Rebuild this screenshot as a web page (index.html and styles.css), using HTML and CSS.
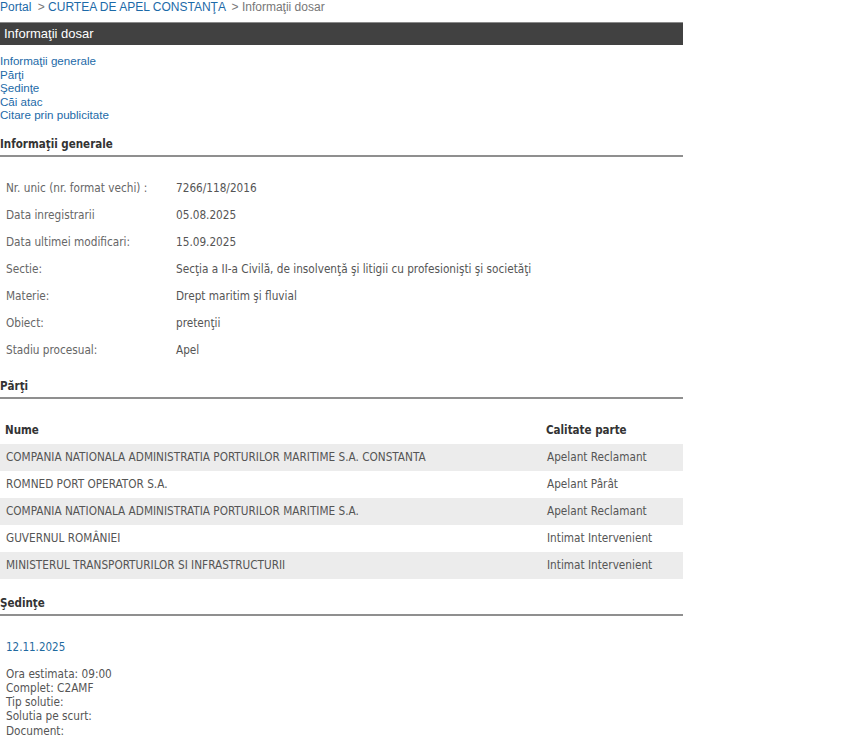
FILE: index.html
```html
<!DOCTYPE html>
<html>
<head>
    <meta charset="utf-8">
    <title>Informaţii dosar</title>
    <link rel="stylesheet" href="styles.css">
</head>
<body>

<div class="page">
    <div class="breadcrumb">
        <a href="#">Portal</a> <span class="sep">&gt;</span> <a href="#">CURTEA DE APEL CONSTANŢA</a> <span class="sep">&gt;</span> <span class="current">Informaţii dosar</span>
    </div>

    <div class="title-bar">Informaţii dosar</div>

    <ul class="toc">
        <li><a href="#info">Informaţii generale</a></li>
        <li><a href="#parti">Părţi</a></li>
        <li><a href="#sedinte">Şedinţe</a></li>
        <li><a href="#cai">Căi atac</a></li>
        <li><a href="#citare">Citare prin publicitate</a></li>
    </ul>

    <h3 class="section-title" id="info">Informaţii generale</h3>
    <table class="info">
        <tr><td class="label">Nr. unic (nr. format vechi) :</td><td>7266/118/2016</td></tr>
        <tr><td class="label">Data inregistrarii</td><td>05.08.2025</td></tr>
        <tr><td class="label">Data ultimei modificari:</td><td>15.09.2025</td></tr>
        <tr><td class="label">Sectie:</td><td>Secţia a II-a Civilă, de insolvenţă şi litigii cu profesionişti şi societăţi</td></tr>
        <tr><td class="label">Materie:</td><td>Drept maritim şi fluvial</td></tr>
        <tr><td class="label">Obiect:</td><td>pretenţii</td></tr>
        <tr><td class="label">Stadiu procesual:</td><td>Apel</td></tr>
    </table>

    <h3 class="section-title" id="parti">Părţi</h3>
    <table class="parti">
        <tr><th class="name">Nume</th><th>Calitate parte</th></tr>
        <tr class="odd"><td>COMPANIA NATIONALA ADMINISTRATIA PORTURILOR MARITIME S.A. CONSTANTA</td><td>Apelant Reclamant</td></tr>
        <tr><td>ROMNED PORT OPERATOR S.A.</td><td>Apelant Pârât</td></tr>
        <tr class="odd"><td>COMPANIA NATIONALA ADMINISTRATIA PORTURILOR MARITIME S.A.</td><td>Apelant Reclamant</td></tr>
        <tr><td>GUVERNUL ROMÂNIEI</td><td>Intimat Intervenient</td></tr>
        <tr class="odd"><td>MINISTERUL TRANSPORTURILOR SI INFRASTRUCTURII</td><td>Intimat Intervenient</td></tr>
    </table>

    <h3 class="section-title" id="sedinte">Şedinţe</h3>
    <div class="sedinta">
        <div class="sedinta-date">12.11.2025</div>
        <div class="sedinta-details">
            Ora estimata: 09:00<br>
            Complet: C2AMF<br>
            Tip solutie:<br>
            Solutia pe scurt:<br>
            Document:
        </div>
    </div>
</div>

</body>
</html>
```

FILE: styles.css
```css
body { margin: 0; background: #fff; font-family: "Liberation Sans", Arial, sans-serif; }
a { text-decoration: none; color: #1c6aa8; }

.page { width: 683px; }

.breadcrumb { font-size: 12px; line-height: 14px; color: #777; height: 22px; }
.breadcrumb .sep { color: #777; margin-left: 3px; }

.title-bar { background: #414141; border-top: 1px solid #8a8a8a; color: #fff; font-size: 13px; line-height: 22px; padding-left: 4px; }

.toc { list-style: none; margin: 9px 0 0 0; padding: 0; font-size: 11.6px; line-height: 13.5px; }

.section-title { margin: 14px 0 0 0; padding: 0 0 3px 0; font: bold 11.5px/16px "DejaVu Sans Condensed", Tahoma, sans-serif; color: #333; border-bottom: 2px solid #8f8f8f; }

table { border-collapse: collapse; width: 100%; font-family: "DejaVu Sans Condensed", Tahoma, sans-serif; font-size: 11.7px; color: #555; }
td, th { padding: 0 0 0 6px; height: 27px; text-align: left; vertical-align: middle; }

.info { margin: 18px 0 14px 0; }
.info td.label { width: 164px; color: #666; }

.parti { margin-top: 18px; margin-bottom: 16px; }
.parti th { font-size: 11.5px; font-weight: bold; color: #333; padding-left: 5px; }
.parti td:last-child, .parti th:last-child { width: 136px; }
.parti tr.odd td { background: #ececec; }

.sedinta { font-family: "DejaVu Sans Condensed", Tahoma, sans-serif; font-size: 11.7px; padding-left: 6px; }
.sedinta-date { color: #1f6aa0; font-size: 11.5px; line-height: 14px; margin-top: 24px; }
.sedinta-details { color: #555; line-height: 14.3px; margin-top: 13px; }
```
